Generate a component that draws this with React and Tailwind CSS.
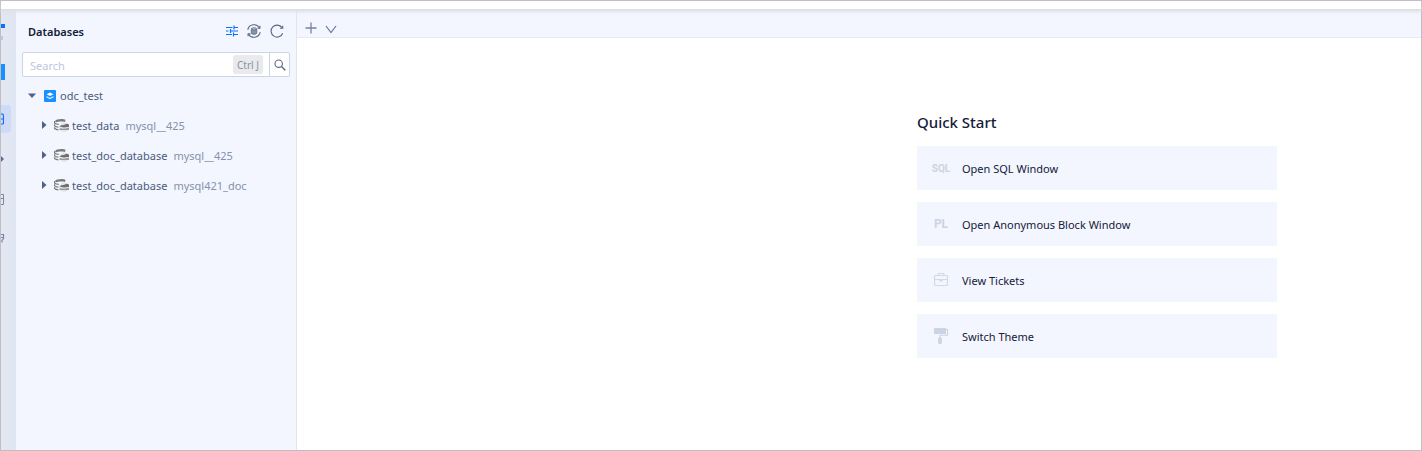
import { useState } from "react";

const databases = [
  { id: 1, name: "test_data", source: "mysql__425" },
  { id: 2, name: "test_doc_database", source: "mysql__425" },
  { id: 3, name: "test_doc_database", source: "mysql421_doc" },
];

const FiltersIcon = () => (
  <svg className="w-3 h-3" viewBox="0 0 12 12" fill="none" stroke="#0a70ff" strokeWidth="1.2">
    <path d="M0 2.5h6.500M8.500 2.5h3.500M8 .5v4M0 6h2.500M5 6h7M4.5 4v4M0 9.5h6M8 9.5h4M7.500 7.5v4" />
  </svg>
);

const SyncDatabaseIcon = () => (
  <svg className="w-3.5 h-3.5" viewBox="0 0 14 14" fill="none" stroke="#5a6682" strokeWidth="1.1">
    <path d="M.8 5.8A6.300 6.300 0 0 1 12.400 3.800M13.200 8.200A6.300 6.300 0 0 1 1.600 10.200" />
    <path d="M12.900 1.800v2.300h-2.300M1.100 12.200V9.900h2.300" />
    <path d="M4.300 5v4.200c0 .7 1.200 1.100 2.700 1.100s2.700-.4 2.700-1.100V5z" fill="#8b93a6" strokeWidth=".8" />
    <ellipse cx="7" cy="4.900" rx="2.700" ry="1.100" fill="#c5cad6" strokeWidth=".8" />
  </svg>
);

const ReloadIcon = () => (
  <svg className="w-3.5 h-3.5" viewBox="0 0 14 14" fill="none" stroke="#5a6682" strokeWidth="1.1">
    <path d="M12.700 9.300A6 6 0 1 1 12 3.600" />
    <path d="M12.700 1.700v2.600h-2.600" />
  </svg>
);

const SearchIcon = () => (
  <svg className="w-3 h-3" viewBox="0 0 12 12" fill="none" stroke="#5a6682" strokeWidth="1.1">
    <circle cx="4.700" cy="4.700" r="3.700" />
    <path d="M7.400 7.400L11.300 11.300" strokeWidth="1.400" />
  </svg>
);

const ProjectIcon = () => (
  <svg className="w-3 h-3 shrink-0" viewBox="0 0 12 12">
    <rect width="12" height="12" rx="1" fill="#1890ff" />
    <path d="M6 2.500L9.500 4.300 6 6.100 2.500 4.300z" fill="#fff" />
    <path d="M2.500 6L6 7.700 9.500 6v1.500L6 9.300 2.500 7.500z" fill="#c5e2ff" />
  </svg>
);

const DatabaseIcon = () => (
  <svg className="w-[15px] h-[15px] shrink-0" viewBox="0 0 15 15">
    <path d="M1.200 2.800C2 .8 9.500.2 11.500 1.800L11 4C8 3.200 4 3.400 1.800 4.400z" fill="#777b7b" />
    <path d="M.6 3v2.200c1 1 2.600 1.200 4.200 1.200M.6 6.300v1.500c1 1 2.400 1.300 3.800 1.300M.6 9.300v1.200c1 1 2.400 1.300 3.800 1.300" fill="none" stroke="#777b7b" strokeWidth="1.200" />
    <circle cx="10.200" cy="9.200" r="4.700" fill="#e2e3e6" />
    <path d="M5.200 8.800C7 6.400 9.500 7.400 11 6.400s3-.6 4 .4v2.400c-1.500-.6-3.200 0-4.800.2s-3.200-.8-5-.6z" fill="#6e7070" />
    <path d="M5.200 11c1.500-1.200 3.300 0 5-.3s3.500-.7 4.800-.4v1.500H5.500z" fill="#7d8080" />
  </svg>
);

const BriefcaseIcon = () => (
  <svg className="w-4 h-4" viewBox="0 0 16 16" fill="none" stroke="#d3d9e7" strokeWidth="1.200">
    <rect x="1.600" y="3.500" width="12.800" height="10" rx=".6" />
    <path d="M5.200 3.500V1.500h5.600v2M1.600 7.500h12.800" />
    <path d="M6.200 7.500h3.600v1.200L8 9.700 6.200 8.700z" fill="#d3d9e7" stroke="none" />
  </svg>
);

const PaintRollerIcon = () => (
  <svg className="w-4 h-4" viewBox="0 0 16 16" fill="#ccd3e3">
    <rect x="1" y="0" width="12" height="6" rx=".6" />
    <path d="M13 1.500h1.500v5.700H7v3" fill="none" stroke="#ccd3e3" strokeWidth="1.100" />
    <rect x="5.200" y="9.500" width="3.600" height="6.500" rx="1" />
  </svg>
);

const quickActions = [
  { label: "Open SQL Window", icon: <span className="pt-0.5 text-[10px] font-bold">SQL</span> },
  { label: "Open Anonymous Block Window", icon: <span className="text-xs font-bold">PL</span> },
  { label: "View Tickets", icon: <BriefcaseIcon /> },
  { label: "Switch Theme", icon: <PaintRollerIcon /> },
];

const Caret = ({ open }) => (
  <svg className="w-2 h-2 shrink-0" viewBox="0 0 8 8" fill="#50608a">
    <path d={open ? "M0 1.500h8L4 6z" : "M2 0v8l4.500-4z"} />
  </svg>
);

// The rail is collapsed, only the right edge of each item stays visible
const NavRail = () => (
  <nav aria-label="Main" className="w-[15px] shrink-0 overflow-hidden bg-gradient-to-r from-[#e3e8f3] to-[#dfe5f2] pt-3">
    <svg className="w-1 h-5" viewBox="0 0 4 20">
      <rect y="2" width="4" height="4" fill="#0a70ff" />
      <rect y="14" width="2" height="4" fill="#b5cdec" />
    </svg>
    <button aria-label="Project" className="mt-[22px] block w-1 h-4 bg-[#1890ff]" />
    <button aria-label="SQL console" className="mt-[25px] flex items-center w-2.5 h-7 rounded-r-sm bg-[#cddaf8]">
      <svg className="w-[3px] h-3" viewBox="0 0 3 12" fill="none" stroke="#0a70ff">
        <path d="M0 1h1.500L2.500 2v8.500L1.500 11H0M0 6h2.500" strokeWidth="1.200" />
      </svg>
    </button>
    <button aria-label="Tasks" className="mt-5 block w-1 h-3">
      <svg className="w-1 h-3" viewBox="0 0 4 12" fill="#5c6b92">
        <path d="M0 3l3 3-3 3z" />
      </svg>
    </button>
    <button aria-label="Data sources" className="mt-7 block w-1 h-3">
      <svg className="w-1 h-3" viewBox="0 0 4 12" fill="none" stroke="#7886a8">
        <path d="M0 1.500h2.500v10H0M0 5.500h2.500" />
      </svg>
    </button>
    <button aria-label="Operations" className="mt-7 block w-1 h-3">
      <svg className="w-1 h-3" viewBox="0 0 4 12" fill="none" stroke="#7886a8">
        <path d="M0 1.500h2.500v4L1 7.500v2M0 4.500h2.500" strokeWidth="1.200" />
      </svg>
    </button>
  </nav>
);

const DatabaseRow = ({ name, source }) => (
  <li className="flex items-center h-[30px] pl-[18px]">
    <button aria-label="Expand" className="shrink-0 pb-0.5">
      <Caret />
    </button>
    <span className="ml-1.5 pb-0.5">
      <DatabaseIcon />
    </span>
    <span className="ml-[3px] text-[#4c5a7d]">{name}</span>
    <span className="ml-1.5 text-[#8592ad]">{source}</span>
  </li>
);

const Sidebar = () => {
  const [query, setQuery] = useState("");
  const [open, setOpen] = useState(true);

  const visible = databases.filter((db) => db.name.includes(query.trim()));

  return (
    <aside className="w-[281px] shrink-0 border-r border-[#dfe5f1] bg-[#f3f6fe] px-1.5">
      <div className="flex items-center justify-between h-[42px] px-1.5">
        <h2 className="pt-0.5 font-semibold text-[#132039]">Databases</h2>
        <div className="flex items-center gap-[9px]">
          <button aria-label="Filter"><FiltersIcon /></button>
          <button aria-label="Sync"><SyncDatabaseIcon /></button>
          <button aria-label="Reload"><ReloadIcon /></button>
        </div>
      </div>

      <div className="flex h-[25px] rounded-xs border border-[#cbd4e8] bg-white">
        <input
          type="text"
          aria-label="Search databases"
          placeholder="Search"
          value={query}
          onChange={(e) => setQuery(e.target.value)}
          className="min-w-0 flex-1 px-[7px] pt-0.5 outline-none placeholder:text-[#bcc6da]"
        />
        <kbd className="self-center mr-1.5 flex items-center h-[19px] rounded-xs bg-[#e8eaeb] px-1 font-[inherit] text-[10px] text-[#8592ad]">
          Ctrl J
        </kbd>
        <button aria-label="Search" className="flex w-5 items-center justify-center border-l border-[#cbd4e8]">
          <SearchIcon />
        </button>
      </div>

      <ul className="mt-1">
        <li>
          <div className="flex items-center h-[30px] pl-1.5">
            <button aria-label="Toggle project" onClick={() => setOpen(!open)} className="shrink-0">
              <Caret open={open} />
            </button>
            <span className="ml-2">
              <ProjectIcon />
            </span>
            <span className="ml-1 text-[#4c5a7d]">odc_test</span>
          </div>
          {open && (
            <ul>
              {visible.map((db) => (
                <DatabaseRow key={db.id} name={db.name} source={db.source} />
              ))}
            </ul>
          )}
        </li>
      </ul>
    </aside>
  );
};

const App = () => (
  <div className="flex flex-col min-h-screen border border-[#bfbfbf] bg-white font-['Noto_Sans','Open_Sans',sans-serif] text-[11px] leading-4">
    <header className="relative h-[9px] border-b border-[#dedfe0] bg-white shadow-[0_2px_3px_#dfe1e4]" />

    <div className="flex flex-1">
      <NavRail />
      <Sidebar />

      <main className="flex-1 min-w-0">
        {/* Tabs */}
        <div className="flex items-center gap-2 h-7 border-b border-[#e6eaf2] bg-[#f3f6fe] pl-2 pt-2">
          <button aria-label="New tab">
            <svg className="w-3 h-3" viewBox="0 0 12 12" stroke="#7682a0" strokeWidth="1.300">
              <path d="M6 .5v11M.5 6h11" />
            </svg>
          </button>
          <button aria-label="More tabs">
            <svg className="w-3 h-3" viewBox="0 0 12 12" fill="none" stroke="#66749a" strokeWidth="1.200">
              <path d="M1 4l5 6.500L11 4" />
            </svg>
          </button>
        </div>

        {/* Quick start */}
        <div className="flex justify-end pt-[72px] pr-36">
          <section className="w-[360px]">
            <h1 className="text-[15px] leading-6 font-medium text-[#132039]">Quick Start</h1>
            <div className="mt-3 flex flex-col gap-3">
              {quickActions.map((action) => (
                <button
                  key={action.label}
                  className="flex items-center h-11 bg-[#f3f6fe] px-4 text-[#132039]"
                >
                  <span className="flex w-4 justify-center font-['Roboto',sans-serif] text-[#ccd3e3]">
                    {action.icon}
                  </span>
                  <span className="ml-[13px] pt-0.5">{action.label}</span>
                </button>
              ))}
            </div>
          </section>
        </div>
      </main>
    </div>
  </div>
);

export default App;
